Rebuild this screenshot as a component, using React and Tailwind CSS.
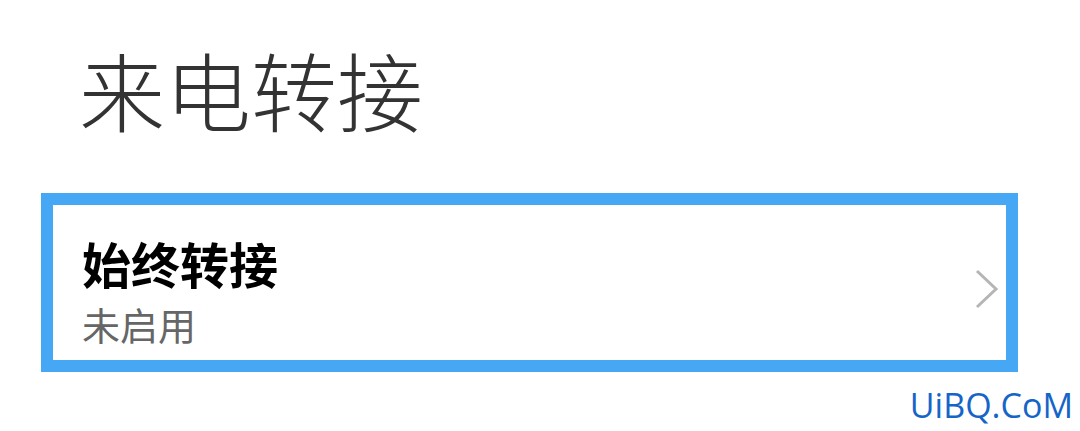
import React from 'react';

const cjk = { fontFamily: '"Noto Sans CJK SC", "Noto Sans", sans-serif' };

const App = () => {
  return (
    <div className="w-[1080px] h-[431px] bg-white overflow-hidden flex flex-col" style={cjk}>
      <h1 className="h-[143px] pl-[79px] pt-[46px] text-[86px] leading-none font-light text-[#333333]">
        来电转接
      </h1>
      <div className="mt-[50px] ml-[41px] w-[977px] h-[179px] border-[12px] border-[#46a7f5] bg-white flex items-center justify-between pl-[29px] pr-[7px]">
        <div className="flex flex-col pt-[16px]">
          <span className="text-[49px] leading-none font-bold text-black">始终转接</span>
          <span className="mt-[18px] text-[38px] leading-none text-[#666666]">未启用</span>
        </div>
        <svg width="24" height="40" viewBox="0 0 24 40" fill="none" className="mt-[12px]">
          <path d="M2 2 L21 20 L2 38" stroke="#b5b5b5" strokeWidth="3" />
        </svg>
      </div>
      <div className="flex justify-end pr-[7px] mt-[16px]">
        <span
          className="text-[34px] leading-none text-[#1565c8]"
          style={{ fontFamily: '"Open Sans", sans-serif' }}
        >
          UiBQ.CoM
        </span>
      </div>
    </div>
  );
};

export default App;
